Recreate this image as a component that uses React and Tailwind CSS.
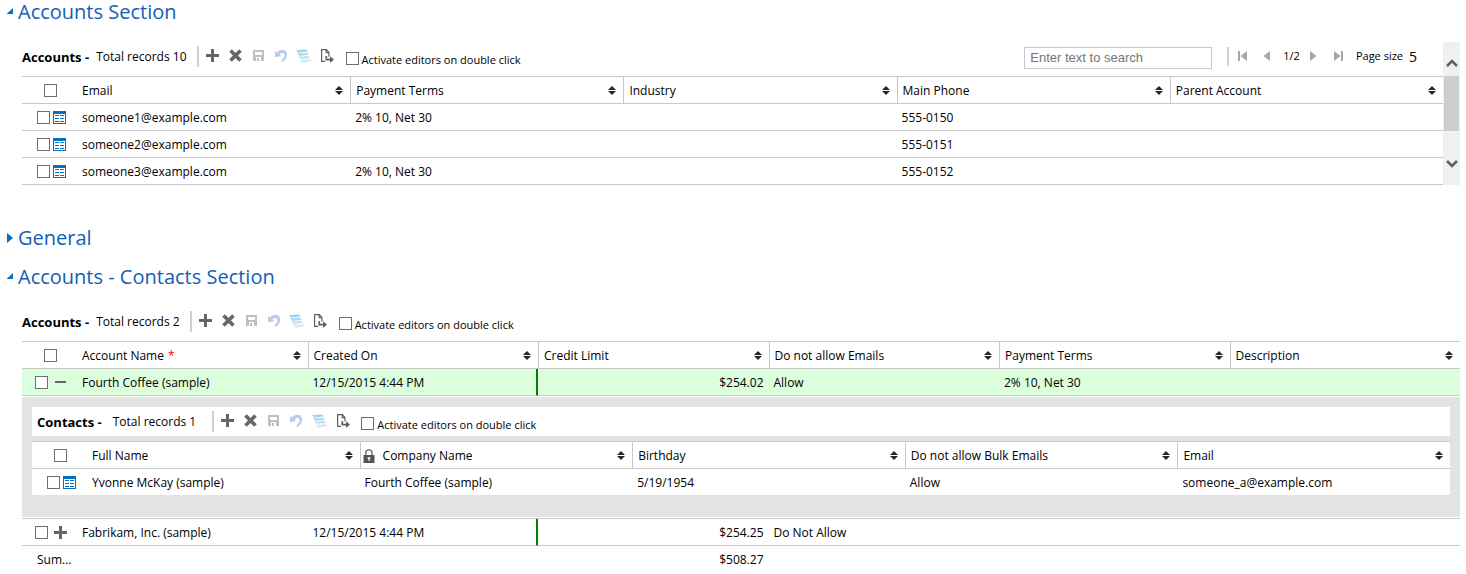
import React from "react";

const line = "border-[#c8c8c8]";
const box =
  "block h-[13px] w-[13px] shrink-0 appearance-none border border-[#6e6e6e] bg-white checked:bg-[#0072c6]";

function Check({ label, className = "" }) {
  return <input type="checkbox" aria-label={label} className={`${box} ${className}`} />;
}

function PlusIcon() {
  return (
    <svg width="13" height="13" viewBox="0 0 13 13" fill="#666" shapeRendering="crispEdges">
      <path d="M5 0h3v5h5v3H8v5H5V8H0V5h5z" />
    </svg>
  );
}

function MinusIcon() {
  return (
    <svg width="13" height="13" viewBox="0 0 13 13" fill="#666" shapeRendering="crispEdges">
      <path d="M1 5h11v2H1z" />
    </svg>
  );
}

function DeleteIcon() {
  return (
    <svg width="13" height="13" viewBox="0 0 13 13" fill="none" stroke="#666" strokeWidth="3.6">
      <path d="M1.5 1.5l10 10M11.5 1.5l-10 10" />
    </svg>
  );
}

function SaveIcon() {
  return (
    <svg width="11" height="11" viewBox="0 0 11 11" shapeRendering="crispEdges">
      <path d="M0 0h11v11H0z" fill="#c0c0c0" />
      <path d="M2 2h7v3H2zM3 7h5v4H3z" fill="#fff" />
      <path d="M4 8h2v3H4z" fill="#c0c0c0" />
    </svg>
  );
}

function UndoIcon() {
  return (
    <svg width="13" height="13" viewBox="0 0 13 13">
      <path d="M0 2l2 1.6C4.6.6 8 0 10 1.600c3.600 2.600 2.400 8-2.600 11.400L6.200 12C9.600 8.600 10.400 5.800 8.600 4.400 7.400 3.400 5.600 4 4.600 5.400L6.600 7 0 8.200z" fill="#b9cbef" />
    </svg>
  );
}

function LayersIcon() {
  return (
    <svg width="16" height="14" viewBox="0 0 16 14">
      <path d="M0 .5C3 1.800 6-.3 11 1l1 2C8 2.500 6 4.800 2 3.600z" fill="#9fd0f0" />
      <path d="M1 3.600c3 1.800 6-.5 11 .6l1.200 2C9.500 5.500 7.500 8 3.200 6.900z" fill="#aed8f3" />
      <path d="M2.200 6.800c3 1.800 6-.5 10.800.6l1.400 2C10.500 8.700 8.500 11 4.500 10z" fill="#bfe0f6" />
      <path d="M4 10.200c3 1.400 6-.5 10.400.5l1.200 1.600c-3.600-.5-6 1.700-9.800 1.300z" fill="#d0e8f8" />
      <path d="M3 3.400c3 .9 5-.9 9-.5M4.500 6.700c3 .9 5-.9 8.500-.5M6 9.900c3 .9 5-.9 8-.5" fill="none" stroke="#fff" strokeWidth=".7" />
    </svg>
  );
}

function ExportIcon() {
  return (
    <svg width="14" height="14" viewBox="0 0 14 14" fill="none" stroke="#5f5f5f" strokeWidth="1.200">
      <path d="M5 12.400H1.600V.6h4.800l2.500 2.800v4.100M6.200.6v3h2.700" />
      <path d="M6.300 7v3.600h5" strokeWidth="1.700" />
      <path d="M10 7.300l4 3.300-4 3.300z" fill="#5f5f5f" stroke="none" />
    </svg>
  );
}

function RecordIcon() {
  return (
    <svg width="13" height="13" viewBox="0 0 13 13" shapeRendering="crispEdges">
      <path d="M0 0h13v13H0z" fill="#0072c6" />
      <path d="M1 3h11v9H1z" fill="#fff" />
      <path d="M2 4h4v1H2zM7 4h4v1H7zM2 7h4v1H2zM7 7h4v1H7zM2 10h4v1H2zM7 10h4v1H7z" fill="#0072c6" />
    </svg>
  );
}

function SortIcon() {
  return (
    <svg width="8" height="9" viewBox="0 0 8 9" fill="#1f2a30">
      <path d="M4 0l4 4H0zM0 5h8L4 9z" />
    </svg>
  );
}

function LockIcon() {
  return (
    <svg width="12" height="14" viewBox="0 0 12 14" fill="none">
      <path d="M2.800 7V4a3.100 3.100 0 0 1 6.200 0v3" stroke="#666" strokeWidth="1.400" />
      <path d="M.5 6h11v8H.5z" fill="#555" />
      <path d="M5.300 8.500h1.400v3.300H5.300zM4.600 8.200h2.800v1.400H4.600z" fill="#fff" />
    </svg>
  );
}

function SectionTitle({ open = true, children }) {
  return (
    <h2 className="pl-[6px] text-[20px] leading-6 text-[#1160b7]">
      <button type="button" aria-expanded={open} className="flex items-center gap-[4px]">
        <svg width="8" height="10" viewBox="0 0 8 10" fill="#0072c6">
          {open ? <path d="M7 1v6H0.500z" /> : <path d="M1 0l6 5-6 5z" />}
        </svg>
        {children}
      </button>
    </h2>
  );
}

const actions = [
  ["Add", PlusIcon],
  ["Delete", DeleteIcon],
  ["Save", SaveIcon],
  ["Undo", UndoIcon],
  ["Recalculate", LayersIcon],
  ["Export", ExportIcon],
];

function Toolbar({ title, total, inset, children }) {
  return (
    <div className={`mb-[5px] flex h-[29px] items-center bg-white ${inset ? "pl-[5px]" : ""}`}>
      <h3 className={`text-[13px] font-bold ${inset ? "mr-[11px]" : "mr-[7px]"}`}>{title} -</h3>
      <span>Total records {total}</span>
      <div className={`h-[21px] w-[2px] bg-[#d0d0d0] ${inset ? "ml-4" : "ml-[10px]"}`} />
      <div className="flex pb-[2px] pl-[2px]">
        {actions.map(([name, Icon]) => (
          <button key={name} type="button" aria-label={name} className="flex h-6 w-[23px] items-center justify-center">
            <Icon />
          </button>
        ))}
      </div>
      <label className="flex items-center gap-[3px] pt-[7px] pl-[7px] text-[11px]">
        <input type="checkbox" className={`${box} mb-[4px]`} />
        Activate editors on double click
      </label>
      {children}
    </div>
  );
}

function PagerButton({ label, d, className }) {
  return (
    <button type="button" aria-label={label} className={className}>
      <svg width="10" height="10" viewBox="0 0 10 10" fill="#a6a6a6">
        <path d={d} />
      </svg>
    </button>
  );
}

function Pager() {
  return (
    <div className="ml-auto flex items-center pr-[25px]">
      <input
        type="text"
        aria-label="Search"
        placeholder="Enter text to search"
        className="mt-[2px] h-[22px] w-[188px] border border-[#c8c8c8] pl-[5px] font-['Liberation_Sans',Arial,sans-serif] text-[13px] placeholder:text-[#757575]"
      />
      <div className="ml-[15px] h-[19px] w-[2px] bg-[#d0d0d0]" />
      <div className="flex items-center pb-[2px] text-[11px]">
        <PagerButton label="First page" className="ml-[9px]" d="M0 0h2v10H0zM9 0v10L2.500 5z" />
        <PagerButton label="Previous page" className="ml-[14px]" d="M8 0v10L1.500 5z" />
        <span className="ml-[11px]">1/2</span>
        <PagerButton label="Next page" className="ml-[9px]" d="M1 0v10L7.500 5z" />
        <PagerButton label="Last page" className="ml-[14px]" d="M1 0v10L7.500 5zM8 0h2v10H8z" />
        <label className="ml-[13px] flex items-center gap-[6px]">
          Page size
          <select className="appearance-none bg-transparent pt-[2px] text-[14px]">
            <option>5</option>
          </select>
        </label>
      </div>
    </div>
  );
}

function Grid({ columns, children }) {
  return (
    <table className="w-full table-fixed border-separate border-spacing-0 bg-white text-left">
      <colgroup>
        <col className="w-[55px]" />
        {columns.map((c) => (
          <col key={c.name} />
        ))}
      </colgroup>
      <thead>
        <tr className="h-[28px]">
          <th className={`border-y ${line} p-0 pl-[22px]`}>
            <Check label="Select all records" />
          </th>
          {columns.map((c, i) => (
            <th key={c.name} className={`border-y ${line} p-0 pr-[7px] font-normal ${i ? "border-l pl-[5px]" : "pl-[5px]"}`}>
              <button type="button" className="flex w-full items-center justify-between">
                <span className={`flex items-center pt-px ${c.locked ? "-ml-[3px] gap-[8px]" : "gap-[4px]"}`}>
                  {c.locked && <LockIcon />}
                  {c.name}
                  {c.required && <span className="text-[#ff0000]">*</span>}
                </span>
                <SortIcon />
              </button>
            </th>
          ))}
        </tr>
      </thead>
      <tbody>{children}</tbody>
    </table>
  );
}

function Row({ lead, cells, last, selected, limit }) {
  return (
    <tr className={`${last ? "h-[26px]" : "h-[27px]"} ${selected ? "bg-[#ddfedd]" : ""}`}>
      <td className={`p-0 ${last ? "" : `border-b ${line}`}`}>{lead}</td>
      {cells.map((text, i) => (
        <td
          key={i}
          className={`p-0 pt-px pl-[5px] ${last ? "" : `border-b ${line}`} ${
            limit && i === 1 ? "border-r-2 border-r-[#008000]" : ""
          } ${limit && i === 2 ? "pr-[5px] text-right" : ""}`}
        >
          {text}
        </td>
      ))}
    </tr>
  );
}

function RecordLead({ name }) {
  return (
    <div className="flex gap-[3px] pl-[15px]">
      <Check label={`Select ${name}`} />
      <button type="button" aria-label={`Open ${name}`}>
        <RecordIcon />
      </button>
    </div>
  );
}

function ExpandLead({ name, open }) {
  return (
    <div className="flex items-center gap-[6px] pl-[13px]">
      <Check label={`Select ${name}`} />
      <button type="button" aria-expanded={!!open} aria-label={`Contacts of ${name}`}>
        {open ? <MinusIcon /> : <PlusIcon />}
      </button>
    </div>
  );
}

function ScrollBar() {
  return (
    <div className="flex w-[17px] shrink-0 flex-col bg-[#f0f0f0]">
      <button type="button" aria-label="Scroll up" className="flex h-[34px] items-end justify-center pb-[9px]">
        <svg width="12" height="8" viewBox="0 0 12 8" fill="none" stroke="#606060" strokeWidth="2.600">
          <path d="M1 7l5-5 5 5" />
        </svg>
      </button>
      <div className="mx-px h-[55px] bg-[#cdcdcd]" />
      <button type="button" aria-label="Scroll down" className="mt-auto flex h-[25px] items-start justify-center">
        <svg width="12" height="8" viewBox="0 0 12 8" fill="none" stroke="#606060" strokeWidth="2.600">
          <path d="M1 1l5 5 5-5" />
        </svg>
      </button>
    </div>
  );
}

const accounts = [
  ["someone1@example.com", "2% 10, Net 30", "", "555-0150", ""],
  ["someone2@example.com", "", "", "555-0151", ""],
  ["someone3@example.com", "2% 10, Net 30", "", "555-0152", ""],
];

export default function App() {
  return (
    <main className="bg-white font-['Open_Sans','Noto_Sans',sans-serif] text-[12px] leading-4 text-black">
      <section>
        <SectionTitle>Accounts Section</SectionTitle>
        <div className="mt-[18px] mr-[6px] ml-[22px] flex">
          <div className="min-w-0 flex-1">
            <Toolbar title="Accounts" total={10}>
              <Pager />
            </Toolbar>
            <Grid
              columns={[
                { name: "Email" },
                { name: "Payment Terms" },
                { name: "Industry" },
                { name: "Main Phone" },
                { name: "Parent Account" },
              ]}
            >
              {accounts.map((cells) => (
                <Row key={cells[0]} cells={cells} lead={<RecordLead name={cells[0]} />} />
              ))}
            </Grid>
          </div>
          <ScrollBar />
        </div>
      </section>

      <section className="mt-[41px]">
        <SectionTitle open={false}>General</SectionTitle>
      </section>

      <section className="mt-[15px]">
        <SectionTitle>Accounts - Contacts Section</SectionTitle>
        <div className="mt-[18px] mr-[6px] ml-[22px]">
          <Toolbar title="Accounts" total={2} />
          <Grid
            columns={[
              { name: "Account Name", required: true },
              { name: "Created On" },
              { name: "Credit Limit" },
              { name: "Do not allow Emails" },
              { name: "Payment Terms" },
              { name: "Description" },
            ]}
          >
            <Row
              selected
              limit
              lead={<ExpandLead name="Fourth Coffee" open />}
              cells={["Fourth Coffee (sample)", "12/15/2015 4:44 PM", "$254.02", "Allow", "2% 10, Net 30", ""]}
            />
            <tr>
              <td colSpan={7} className={`border-b ${line} p-0 py-px`}>
                <div className="bg-[#e3e3e3] px-[10px] pt-[10px] pb-[22px]">
                  <Toolbar title="Contacts" total={1} inset />
                  <Grid
                    columns={[
                      { name: "Full Name" },
                      { name: "Company Name", locked: true },
                      { name: "Birthday" },
                      { name: "Do not allow Bulk Emails" },
                      { name: "Email" },
                    ]}
                  >
                    <Row
                      last
                      lead={<RecordLead name="Yvonne McKay" />}
                      cells={["Yvonne McKay (sample)", "Fourth Coffee (sample)", "5/19/1954", "Allow", "someone_a@example.com"]}
                    />
                  </Grid>
                </div>
              </td>
            </tr>
            <Row
              limit
              lead={<ExpandLead name="Fabrikam, Inc." />}
              cells={["Fabrikam, Inc. (sample)", "12/15/2015 4:44 PM", "$254.25", "Do Not Allow", "", ""]}
            />
            <tr className="h-[27px]">
              <td className="p-0 pl-[15px]">Sum...</td>
              <td colSpan={2} />
              <td className="p-0 pr-[5px] text-right">$508.27</td>
              <td colSpan={3} />
            </tr>
          </Grid>
        </div>
      </section>
    </main>
  );
}
